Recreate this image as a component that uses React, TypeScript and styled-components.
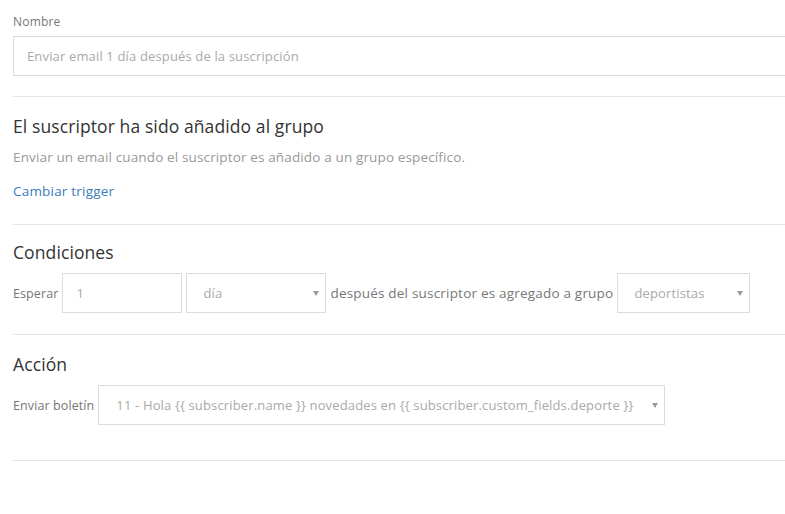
import React from 'react';
import styled, { createGlobalStyle } from 'styled-components';

const GlobalStyle = createGlobalStyle`
  html, body {
    margin: 0;
    padding: 0;
    background: #fff;
    overflow: hidden;
  }
  body {
    font-family: 'Open Sans', 'Noto Sans', sans-serif;
    color: #333;
  }
`;

const Page = styled.div`
  width: 792px;
  margin-left: 13px;
`;

const Section = styled.section<{ $top?: number; $bottom?: number }>`
  padding: ${({ $top }) => $top ?? 17}px 0 ${({ $bottom }) => $bottom ?? 20}px;
  border-bottom: 1px solid #e6e6e6;
`;

const Label = styled.div`
  font-size: 12px;
  line-height: 16px;
  letter-spacing: 0.2px;
  color: #777;
  margin-bottom: 6px;
`;

const InlineLabel = styled.span`
  font-size: 12.5px;
  letter-spacing: 0.1px;
  color: #777;
`;

const TextInput = styled.div<{ $width?: number; $pad?: number }>`
  box-sizing: border-box;
  height: 40px;
  width: ${({ $width }) => ($width ? `${$width}px` : '100%')};
  border: 1px solid #dcdcdc;
  padding: 0 ${({ $pad }) => $pad ?? 13}px;
  display: flex;
  align-items: center;
  font-size: 13px;
  letter-spacing: 0.15px;
  color: #a9a9a9;
  background: #fff;
  flex-shrink: 0;
`;

const Select = styled(TextInput)`
  position: relative;
  padding-right: 24px;
  white-space: nowrap;
  overflow: hidden;
  &::after {
    content: '';
    position: absolute;
    right: 6px;
    top: 17px;
    border-left: 3px solid transparent;
    border-right: 3px solid transparent;
    border-top: 5px solid #9a9a9a;
  }
`;

const Heading = styled.h2`
  margin: 0;
  font-weight: 400;
  font-size: 17.5px;
  line-height: 24px;
  letter-spacing: 0.1px;
  color: #333;
`;

const Description = styled.p`
  margin: 9px 0 0;
  font-size: 13.5px;
  line-height: 20px;
  letter-spacing: 0.14px;
  color: #999;
`;

const Link = styled.a`
  display: inline-block;
  margin-top: 14px;
  font-size: 13.5px;
  line-height: 20px;
  letter-spacing: 0.2px;
  color: #3b7bb8;
  text-decoration: none;
`;

const Row = styled.div`
  display: flex;
  align-items: center;
  gap: 4px;
  margin-top: 9px;
  font-size: 13.5px;
  letter-spacing: 0.2px;
  color: #777;
  white-space: nowrap;
`;

export default function App() {
  return (
    <>
      <GlobalStyle />
      <Page>
        <Section $top={14}>
          <Label>Nombre</Label>
          <TextInput>Enviar email 1 día después de la suscripción</TextInput>
        </Section>

        <Section $bottom={23}>
          <Heading>El suscriptor ha sido añadido al grupo</Heading>
          <Description>
            Enviar un email cuando el suscriptor es añadido a un grupo específico.
          </Description>
          <Link href="#">Cambiar trigger</Link>
        </Section>

        <Section $top={15} $bottom={21}>
          <Heading>Condiciones</Heading>
          <Row>
            <InlineLabel>Esperar</InlineLabel>
            <TextInput $width={120}>1</TextInput>
            <Select $width={140} $pad={16}>día</Select>
            <span>después del suscriptor es agregado a grupo</span>
            <Select $width={133} $pad={16}>deportistas</Select>
          </Row>
        </Section>

        <Section $top={17} $bottom={35}>
          <Heading>Acción</Heading>
          <Row>
            <InlineLabel>Enviar boletín</InlineLabel>
            <Select $width={567} $pad={17}>
              {'11 - Hola {{ subscriber.name }} novedades en {{ subscriber.custom_fields.deporte }}'}
            </Select>
          </Row>
        </Section>
      </Page>
    </>
  );
}
